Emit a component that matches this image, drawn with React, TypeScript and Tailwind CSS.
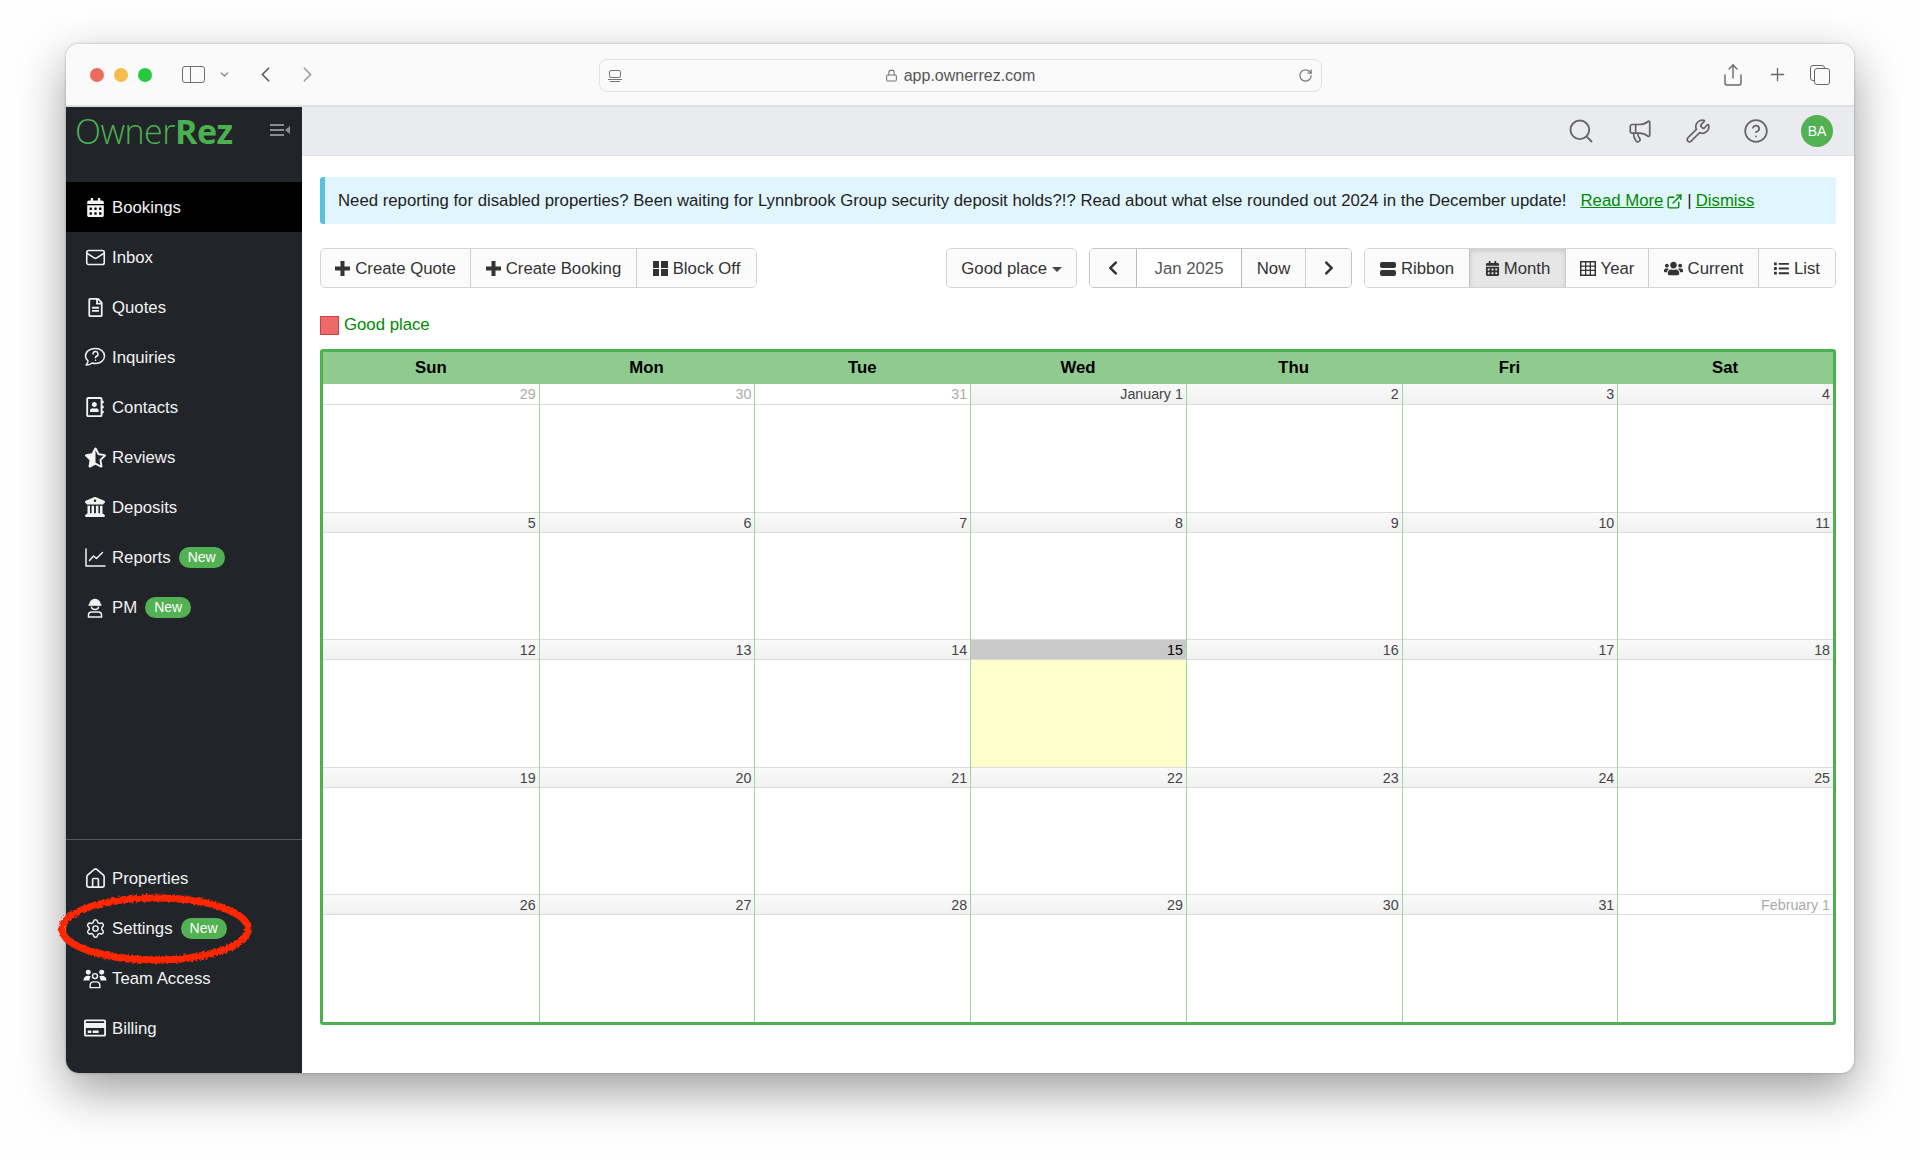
import React from 'react'
import { ChevronDown, ChevronLeft, ChevronRight, CircleHelp, ExternalLink, Home, Lock, Mail, Megaphone, Plus, RotateCw, Search, Settings, Share, Wrench } from 'lucide-react'
import { FaCalendarAlt, FaChevronLeft, FaChevronRight, FaList, FaRegAddressBook, FaRegCreditCard, FaRegFileAlt, FaStarHalfAlt, FaUsers } from 'react-icons/fa'
import { FaBuildingColumns } from 'react-icons/fa6'

const PmIcon = () => (
	<svg width="20" height="21" viewBox="0 0 20 21" fill="none" stroke="currentColor" strokeWidth="1.5">
		<path d="M5 7.5a5 5 0 0 1 10 0z" fill="currentColor" />
		<path d="M3.5 8h13" />
		<path d="M6.5 9.5a3.5 3 0 0 0 7 0" />
		<path d="M3.5 20v-2a3 3 0 0 1 3-3h7a3 3 0 0 1 3 3v2z" />
	</svg>
)

const InquiryIcon = () => (
	<svg width="22" height="20" viewBox="0 0 22 20" fill="none" stroke="currentColor" strokeWidth="1.5" strokeLinecap="round" strokeLinejoin="round">
		<path d="M11.5 1.5c5 0 9 3 9 7.5s-4 7.5-9 7.5c-1.2 0-2.3-.2-3.4-.5-1.5 1.2-3.5 2-6 2 1-1.2 1.8-2.6 2-4-1.6-1.3-2.6-3-2.6-5 0-4.500 4-7.500 10-7.500z" />
		<path d="M9 7a2.500 2.500 0 1 1 3.500 2.300c-.7.3-1 .8-1 1.500" />
		<path d="M11.500 13.200v.1" />
	</svg>
)

const TeamIcon = () => (
	<svg width="25" height="21" viewBox="0 0 25 21" fill="none" stroke="currentColor" strokeWidth="1.5">
		<circle cx="5.500" cy="4" r="2.600" fill="currentColor" stroke="none" />
		<circle cx="19.500" cy="4" r="2.600" fill="currentColor" stroke="none" />
		<path d="M0.500 12.500c0-3 2-4.800 5-4.800 1 0 2 .2 2.600.7-.8 1-1.300 2.400-1.300 4.100z" fill="currentColor" stroke="none" />
		<path d="M24.500 12.500c0-3-2-4.800-5-4.800-1 0-2 .2-2.600.7.800 1 1.300 2.400 1.300 4.100z" fill="currentColor" stroke="none" />
		<circle cx="12.500" cy="8" r="2.600" />
		<path d="M7.500 20v-2.500c0-2 1.500-3.500 3.500-3.500h3c2 0 3.500 1.500 3.500 3.500v2.500z" />
	</svg>
)

const ChartIcon = () => (
	<svg width="21" height="19" viewBox="0 0 21 19" fill="none" stroke="currentColor" strokeWidth="1.5" strokeLinecap="round" strokeLinejoin="round">
		<path d="M1 1v17h19" />
		<path d="M4.500 12.500l4-4.500 3 2.500 6-6" />
	</svg>
)

const ThickPlus = () => (
	<svg width="15" height="15" viewBox="0 0 15 15" fill="#333">
		<path d="M5.500 0h4v5.500H15v4H9.500V15h-4V9.500H0v-4h5.500z" />
	</svg>
)

const YearIcon = () => (
	<svg width="16" height="15" viewBox="0 0 16 15" fill="#333">
		<path d="M0 0h16v15H0z M1.500 1.500v3h3.500v-3z M6.300 1.500v3h3.400v-3z M11 1.500v3h3.500v-3z M1.500 5.800v3h3.500v-3z M6.300 5.800v3h3.400v-3z M11 5.800v3h3.500v-3z M1.500 10.100v3.400h3.500v-3.400z M6.300 10.100v3.400h3.400v-3.400z M11 10.100v3.400h3.500v-3.400z" fillRule="evenodd" />
	</svg>
)

const BlockIcon = () => (
	<span className="grid grid-cols-2 gap-[1.5px] w-[15px] h-[15px]">
		<span className="bg-[#333]"></span>
		<span className="bg-[#333]"></span>
		<span className="bg-[#333]"></span>
		<span className="bg-[#333]"></span>
	</span>
)

const RibbonIcon = () => (
	<span className="flex flex-col gap-[2px] w-[16px]">
		<span className="h-[6px] rounded-[2px] bg-[#333]"></span>
		<span className="h-[6px] rounded-[2px] bg-[#333]"></span>
	</span>
)

const Badge = () => (
	<span className="ml-[8px] bg-[#52b152] text-white text-[14px] leading-[21px] rounded-full px-[9px]">New</span>
)

const NavItem = ({ icon, label, badge, active }: { icon: React.ReactNode; label: string; badge?: boolean; active?: boolean }) => (
	<div className={`flex items-center h-[50px] pl-[17px] text-[16.75px] text-[#f2f2f2] ${active ? 'bg-black' : ''}`}>
		<span className="w-[24px] flex justify-center shrink-0">{icon}</span>
		<span className="ml-[5px] relative top-px">{label}</span>
		{badge && <Badge />}
	</div>
)

const Btn = ({ children, className = '' }: { children: React.ReactNode; className?: string }) => (
	<div className={`h-full flex items-center gap-[5px] bg-[#fbfbfb] border-l border-[#cfcfcf] first:border-l-0 ${className}`}>{children}</div>
)

const days = ['Sun', 'Mon', 'Tue', 'Wed', 'Thu', 'Fri', 'Sat']

const weeks: (string | number)[][] = [
	['29', '30', '31', 'January 1', 2, 3, 4],
	[5, 6, 7, 8, 9, 10, 11],
	[12, 13, 14, 15, 16, 17, 18],
	[19, 20, 21, 22, 23, 24, 25],
	[26, 27, 28, 29, 30, 31, 'February 1'],
]

const isMuted = (v: string | number) => v === '29' || v === '30' || v === '31' || v === 'February 1'

export default function App() {
	return (
		<div className="relative w-[1920px] h-[1161px] overflow-hidden bg-[#fefefe] pt-[44px] pl-[66px] font-['Liberation_Sans',Arial,sans-serif] text-[#333]">
			<div className="w-[1788px] h-[1029px] flex flex-col rounded-[13px] overflow-hidden bg-white shadow-[0_18px_48px_rgba(0,0,0,0.38),0_0_3px_rgba(0,0,0,0.25)]">
				{/* browser chrome */}
				<div className="h-[63px] shrink-0 flex items-center bg-[#fafafa] border-b-2 border-[#dedfe1] relative">
					<div className="flex items-center gap-[10px] ml-[24px]">
						<span className="w-[14px] h-[14px] rounded-full bg-[#ec6a5e]"></span>
						<span className="w-[14px] h-[14px] rounded-full bg-[#f5bd4f]"></span>
						<span className="w-[14px] h-[14px] rounded-full bg-[#25c93f]"></span>
					</div>
					<div className="ml-[30px] w-[23px] h-[17px] border-[1.5px] border-[#6e6e6e] rounded-[3px] flex">
						<span className="w-[8px] border-r-[1.5px] border-[#6e6e6e]"></span>
					</div>
					<ChevronDown className="ml-[13px] text-[#777]" size={13} />
					<ChevronLeft className="ml-[22px] text-[#555]" size={25} strokeWidth={1.6} />
					<ChevronRight className="ml-[17px] text-[#999]" size={25} strokeWidth={1.6} />
					<div className="ml-[279px] mt-[2px] w-[723px] h-[33px] rounded-[8px] border border-[#e2e2e2] bg-[#fafafa] flex items-center px-[8px] text-[#555]">
						<div className="flex flex-col items-center gap-[1px] w-[14px]">
							<span className="w-[12px] h-[8px] border border-[#777] rounded-[2px]"></span>
							<span className="w-[14px] h-px bg-[#777]"></span>
							<span className="w-[10px] h-px bg-[#777]"></span>
						</div>
						<div className="flex-1 flex items-center justify-center gap-[6px] text-[16px]">
							<Lock size={13} className="text-[#777]" />
							<span>app.ownerrez.com</span>
						</div>
						<RotateCw size={15} className="text-[#777]" />
					</div>
					<div className="ml-auto mr-[24px] flex items-center gap-[22px] text-[#666]">
						<Share size={24} strokeWidth={1.4} />
						<Plus size={21} strokeWidth={1.5} />
						<div className="relative w-[20px] h-[20px]">
							<span className="absolute left-0 top-0 w-[15px] h-[16px] border-[1.5px] border-[#666] rounded-[3px]"></span>
							<span className="absolute left-[4px] top-[3px] w-[16px] h-[17px] border-[1.5px] border-[#666] rounded-[3px] bg-[#fafafa]"></span>
						</div>
					</div>
				</div>

				<div className="flex-1 flex min-h-0">
					{/* sidebar */}
					<div className="w-[236px] shrink-0 bg-[#212529] flex flex-col">
						<div className="h-[75px] shrink-0 flex items-start pl-[9px] pr-[12px]">
							<div className="mt-[1px] text-[34px] leading-[46px] text-[#4caf50] font-['Open_Sans',sans-serif] font-light tracking-[-0.5px]">
								Owner<span className="font-bold">Rez</span>
							</div>
							<div className="ml-auto mt-[17px] flex items-center gap-[1px]">
								<div className="flex flex-col gap-[3px]">
									<span className="w-[14px] h-[2px] bg-[#8a8d90]"></span>
									<span className="w-[14px] h-[2px] bg-[#8a8d90]"></span>
									<span className="w-[14px] h-[2px] bg-[#8a8d90]"></span>
								</div>
								<span className="w-0 h-0 border-y-[4px] border-y-transparent border-r-[5px] border-r-[#8a8d90]"></span>
							</div>
						</div>
						<NavItem active icon={<FaCalendarAlt size={19} />} label="Bookings" />
						<NavItem icon={<Mail size={21} strokeWidth={1.8} />} label="Inbox" />
						<NavItem icon={<FaRegFileAlt size={19} />} label="Quotes" />
						<NavItem icon={<InquiryIcon />} label="Inquiries" />
						<NavItem icon={<FaRegAddressBook size={20} />} label="Contacts" />
						<NavItem icon={<FaStarHalfAlt size={21} />} label="Reviews" />
						<NavItem icon={<FaBuildingColumns size={20} />} label="Deposits" />
						<NavItem badge icon={<ChartIcon />} label="Reports" />
						<NavItem badge icon={<PmIcon />} label="PM" />
						<div className="flex-1 border-b border-[#55585c]"></div>
						<div className="h-[13px] shrink-0"></div>
						<NavItem icon={<Home size={23} strokeWidth={1.7} />} label="Properties" />
						<NavItem badge icon={<Settings size={21} strokeWidth={1.7} />} label="Settings" />
						<NavItem icon={<TeamIcon />} label="Team Access" />
						<NavItem icon={<FaRegCreditCard size={22} />} label="Billing" />
						<div className="h-[20px] shrink-0"></div>
					</div>

					{/* main */}
					<div className="flex-1 min-w-0 flex flex-col">
						<div className="h-[49px] shrink-0 bg-[#e9ebee] border-b border-[#dfe1e3] flex items-center justify-end gap-[32px] pr-[21px] text-[#666]">
							<Search size={28} strokeWidth={1.6} />
							<Megaphone size={26} strokeWidth={1.6} />
							<Wrench size={26} strokeWidth={1.6} />
							<CircleHelp size={26} strokeWidth={1.6} />
							<span className="w-[32px] h-[32px] rounded-full bg-[#52b152] text-white text-[14px] flex items-center justify-center">BA</span>
						</div>
						<div className="px-[18px] pt-[21px]">
							<div className="h-[47px] pt-px bg-[#e1f5fe] border-l-[5px] border-[#5bc0de] rounded-[3px] flex items-center pl-[13px] text-[16.75px] text-[#222]">
								<span>Need reporting for disabled properties? Been waiting for Lynnbrook Group security deposit holds?!? Read about what else rounded out 2024 in the December update!</span>
								<span className="ml-[14px] text-[#008a00] underline">Read More</span>
								<ExternalLink size={17} strokeWidth={2} className="ml-[3px] text-[#008a00]" />
								<span className="mx-[4px]">|</span>
								<span className="text-[#008a00] underline">Dismiss</span>
							</div>

							<div className="mt-[24px] h-[40px] flex items-center text-[16.75px] text-[#333]">
								<div className="h-full flex border border-[#d4d4d4] rounded-[5px] overflow-hidden">
									<Btn className="w-[149px] justify-center pt-px"><ThickPlus />Create Quote</Btn>
									<Btn className="w-[166px] justify-center pt-px"><ThickPlus />Create Booking</Btn>
									<Btn className="w-[120px] justify-center pt-px"><BlockIcon />Block Off</Btn>
								</div>
								<div className="ml-auto h-full flex items-center border border-[#d4d4d4] rounded-[5px] bg-[#fbfbfb] px-[14px] pt-px">
									Good place
									<span className="ml-[5px] mt-[2px] w-0 h-0 border-x-[5px] border-x-transparent border-t-[5px] border-t-[#444]"></span>
								</div>
								<div className="ml-[12px] h-full flex border border-[#c4c4c4] rounded-[5px] overflow-hidden">
									<Btn className="w-[46px] justify-center"><FaChevronLeft size={16} /></Btn>
									<div className="w-[105px] pt-px flex items-center justify-center bg-white border-l border-[#bbb] text-[#555]">Jan 2025</div>
									<Btn className="w-[64px] pt-px justify-center !border-[#bbb]">Now</Btn>
									<Btn className="w-[46px] justify-center"><FaChevronRight size={16} /></Btn>
								</div>
								<div className="ml-[12px] h-full flex border border-[#d4d4d4] rounded-[5px] overflow-hidden">
									<Btn className="w-[104px] pt-px justify-center"><RibbonIcon />Ribbon</Btn>
									<div className="w-[96px] pt-px flex items-center justify-center gap-[4px] bg-[#e6e6e6] border-l border-[#c4c4c4] shadow-[inset_0_2px_4px_rgba(0,0,0,0.12)]"><FaCalendarAlt size={15} />Month</div>
									<Btn className="w-[83px] pt-px justify-center border-[#c4c4c4]"><YearIcon />Year</Btn>
									<Btn className="w-[110px] pt-px justify-center"><FaUsers size={19} />Current</Btn>
									<Btn className="flex-1 w-[77px] pt-px justify-center"><FaList size={15} />List</Btn>
								</div>
							</div>

							<div className="mt-[28px] h-[18px] flex items-center text-[16.75px] text-[#008a00]">
								<span className="w-[19px] h-[19px] bg-[#ec6a6a] border border-[#d43f3a]"></span>
								<span className="ml-[5px]">Good place</span>
							</div>

							<div className="mt-[15px] border-[3px] border-[#4caf50] rounded-[3px] h-[676px] flex flex-col overflow-hidden">
								<div className="h-[32px] shrink-0 grid grid-cols-7 bg-[#8fcb8f] text-[16.75px] font-bold text-black">
									{days.map((d) => (
										<div key={d} className="flex items-center justify-center">{d}</div>
									))}
								</div>
								{weeks.map((week, w) => (
									<div key={w} className="flex-1 grid grid-cols-7">
										{week.map((v, i) => {
											const today = v === 15
											return (
												<div key={i} className={`flex flex-col ${i > 0 ? 'border-l border-[#9fd4a1]' : ''} ${today ? 'bg-[#ffffcc]' : ''}`}>
													<div className={`h-[21px] shrink-0 border-b border-t border-[#dcdcdc] text-right pr-[3px] text-[14.25px] leading-[20px] ${w === 0 ? 'border-t-0' : ''} ${today ? 'bg-[#c9c9c9] text-black' : 'bg-gradient-to-b from-[#fafafa] to-[#f1f1f1] text-[#444]'} ${isMuted(v) ? '!text-[#aaa] !bg-none !bg-white' : ''}`}>
														{v}
													</div>
												</div>
											)
										})}
									</div>
								))}
							</div>
						</div>
					</div>
				</div>
			</div>

			{/* hand drawn annotation */}
			<svg className="absolute left-[50px] top-[887px] pointer-events-none" width="210" height="86" viewBox="0 0 210 86" fill="none">
				<filter id="rough"><feTurbulence type="fractalNoise" baseFrequency="0.5" numOctaves="3" seed="3" /><feDisplacementMap in="SourceGraphic" scale="5" /></filter>
				<ellipse cx="105" cy="42" rx="93" ry="31" stroke="#ff2600" strokeWidth="7" filter="url(#rough)" />
			</svg>
		</div>
	)
}
